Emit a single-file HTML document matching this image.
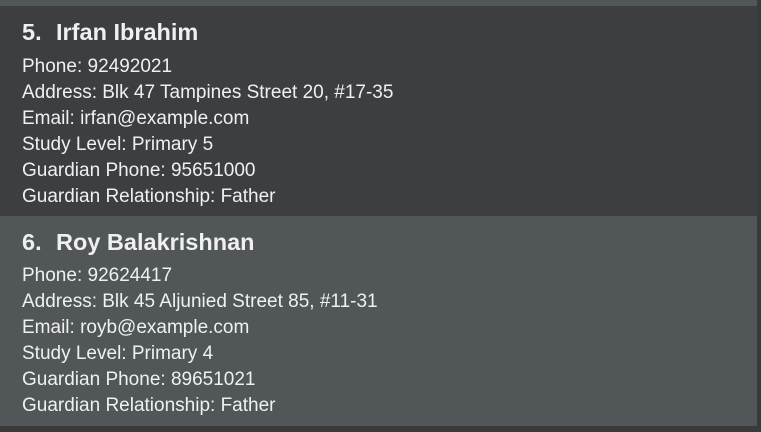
<!DOCTYPE html>
<html><head><style>
html,body{margin:0;padding:0;width:761px;height:432px;overflow:hidden;background:#3a3a3a;font-family:"Liberation Sans",sans-serif;}
.top{position:absolute;left:0;top:0;width:757px;height:6px;background:#515658;}
.card{position:absolute;left:0;width:757px;height:210px;color:#f0f0f0;}
.c1{top:6px;background:#3c3e41;}
.c2{top:216px;background:#515658;}
.strip{position:absolute;left:757px;top:0;width:4px;height:432px;background:#3a3a3a;}
.t{position:absolute;left:22px;top:13px;font-size:23.5px;font-weight:bold;white-space:pre;}
.n{position:absolute;left:56px;top:13px;font-size:23.5px;font-weight:bold;white-space:pre;}
.l{position:absolute;left:22px;font-size:19px;white-space:nowrap;}
</style></head><body>
<div class="top"></div>
<div class="card c1">
<div class="t">5.</div><div class="n">Irfan Ibrahim</div>
<div class="l" style="top:50px">Phone: 92492021</div>
<div class="l" style="top:76px">Address: Blk 47 Tampines Street 20, #17-35</div>
<div class="l" style="top:102px">Email: irfan@example.com</div>
<div class="l" style="top:128px">Study Level: Primary 5</div>
<div class="l" style="top:154px">Guardian Phone: 95651000</div>
<div class="l" style="top:180px">Guardian Relationship: Father</div>
</div>
<div class="card c2">
<div class="t">6.</div><div class="n">Roy Balakrishnan</div>
<div class="l" style="top:49px">Phone: 92624417</div>
<div class="l" style="top:75px">Address: Blk 45 Aljunied Street 85, #11-31</div>
<div class="l" style="top:101px">Email: royb@example.com</div>
<div class="l" style="top:127px">Study Level: Primary 4</div>
<div class="l" style="top:153px">Guardian Phone: 89651021</div>
<div class="l" style="top:179px">Guardian Relationship: Father</div>
</div>
<div class="strip"></div>
</body></html>
